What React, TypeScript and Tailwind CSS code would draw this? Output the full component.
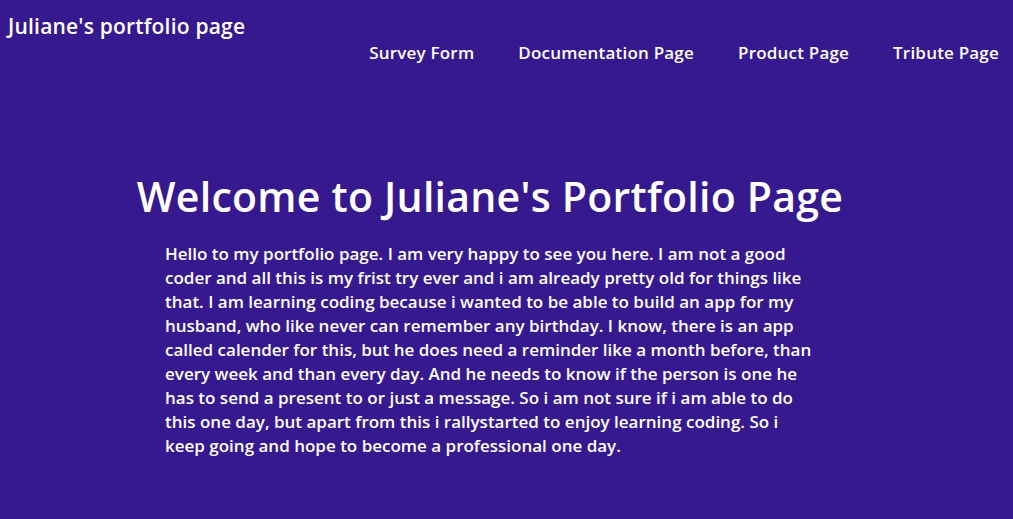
export default function App() {
  const links = ['Survey Form', 'Documentation Page', 'Product Page', 'Tribute Page'];

  return (
    <div className="min-h-[519px] bg-[#36198f] text-white font-['Open_Sans',sans-serif]">
      {/* Header */}
      <header className="px-2 pt-[14px]">
        <h1 className="text-[21px] leading-6 font-semibold tracking-[0.2px]">Juliane's portfolio page</h1>
        <nav className="flex justify-end gap-[44px] pr-[6px] mt-[3px]">
          {links.map((l) => (
            <a key={l} href="#" className="text-[17px] leading-6 font-semibold tracking-[0.2px]">
              {l}
            </a>
          ))}
        </nav>
      </header>

      {/* Main Content */}
      <main className="ml-[165px] w-[655px] pt-[106px]">
        <h2 className="text-[41px] leading-[50px] font-semibold text-center whitespace-nowrap tracking-[0.25px] -ml-[45px] -mr-[40px]">
          Welcome to Juliane's Portfolio Page
        </h2>
        <p className="mt-[21px] text-[17px] leading-6 font-semibold">
          Hello to my portfolio page. I am very happy to see you here. I am not a good coder and all this is my frist try
          ever and i am already pretty old for things like that. I am learning coding because i wanted to be able to
          build an app for my husband, who like never can remember any birthday. I know, there is an app called calender
          for this, but he does need a reminder like a month before, than every week and than every day. And he needs to
          know if the person is one he has to send a present to or just a message. So i am not sure if i am able to do
          this one day, but apart from this i rallystarted to enjoy learning coding. So i keep going and hope to become a
          professional one day.
        </p>
      </main>
    </div>
  );
}
